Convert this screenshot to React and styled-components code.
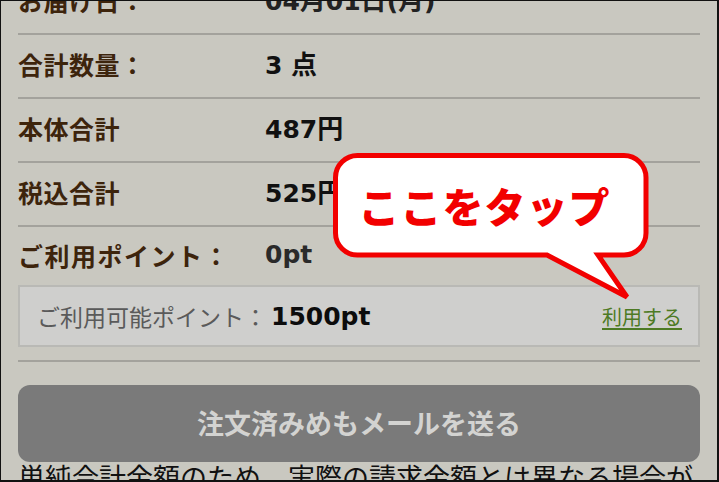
import React from "react";
import styled, { createGlobalStyle } from "styled-components";

const Global = createGlobalStyle`
  html, body { margin: 0; padding: 0; background: #c9c8c0; }
  body { font-family: "Noto Sans CJK JP", "Liberation Sans", sans-serif; }
`;

const Frame = styled.div`
  position: relative;
  box-sizing: border-box;
  width: 719px;
  height: 482px;
  overflow: hidden;
  background: #c9c8c0;
  border-top: 1px solid #111;
  border-left: 1px solid #111;
  border-right: 2px solid #111;
  border-bottom: 2px solid #111;
`;

const Content = styled.div`
  margin-top: -30px;
  padding: 0 17px 0 17px;
  display: flex;
  flex-direction: column;
`;

const Row = styled.div`
  display: flex;
  flex: none;
  box-sizing: border-box;
  height: ${(p) => p.$h || 64}px;
  border-bottom: ${(p) => (p.$noLine ? "none" : "2px solid #a3a29c")};
  align-items: ${(p) => (p.$top ? "flex-start" : "center")};
  padding-top: ${(p) => (p.$top ? "11px" : "0")};
  padding-bottom: ${(p) => (p.$top ? "0" : "4px")};
`;

const Label = styled.div`
  width: 247px;
  flex: none;
  font-size: 25px;
  font-weight: 700;
  color: #3d240c;
  letter-spacing: ${(p) => p.$ls || 0.5}px;
  line-height: 34px;
`;

const Value = styled.div`
  font-family: "DejaVu Sans", "Noto Sans CJK JP", sans-serif;
  font-size: 25px;
  font-weight: 700;
  color: ${(p) => p.$color || "#111"};
  line-height: 34px;
  span {
    font-family: "Noto Sans CJK JP", sans-serif;
    font-size: 26px;
  }
`;

const PointsSection = styled.div`
  display: flex;
  flex-direction: column;
  border-bottom: 2px solid #a3a29c;
  padding-bottom: 13px;
`;

const PointsBox = styled.div`
  box-sizing: border-box;
  height: 62px;
  display: flex;
  align-items: center;
  background: #cfcfcd;
  border: 2px solid #b9b9b5;
  padding: 0 16px 0 17px;
`;

const BoxLabel = styled.span`
  font-size: 23px;
  color: #5a5a5a;
  font-weight: 400;
`;

const BoxValue = styled.span`
  font-family: "DejaVu Sans", sans-serif;
  font-size: 25px;
  font-weight: 700;
  color: #0c0c0c;
  margin-left: 4px;
`;

const UseLink = styled.a`
  margin-left: auto;
  font-size: 20px;
  color: #4d7a24;
  text-decoration: underline;
  text-underline-offset: 3px;
  cursor: pointer;
`;

const SendButton = styled.button`
  margin-top: 23px;
  height: 77px;
  width: 100%;
  border: none;
  border-radius: 12px;
  background: #7a7a7a;
  color: #d3d3d1;
  font-family: "Noto Sans CJK JP", sans-serif;
  font-size: 27px;
  font-weight: 700;
  padding-bottom: 4px;
`;

const Note = styled.p`
  margin: -3px 0 0 0;
  font-size: 27px;
  line-height: 36px;
  color: #111;
  white-space: nowrap;
`;

const Callout = styled.div`
  position: absolute;
  left: 329px;
  top: 149px;
  width: 325px;
  height: 152px;
`;

const CalloutSvg = styled.svg`
  position: absolute;
  inset: 0;
`;

const CalloutText = styled.div`
  position: absolute;
  left: 5px;
  top: 5px;
  width: 311px;
  height: 100px;
  display: flex;
  align-items: center;
  justify-content: center;
  font-size: 41px;
  font-weight: 900;
  color: #f20000;
  letter-spacing: 1px;
  padding-right: 12px;
  box-sizing: border-box;
`;

export default function App() {
  return (
    <>
      <Global />
      <Frame>
        <Content>
          <Row>
            <Label>お届け日：</Label>
            <Value $color="#222">
              04<span>月</span>01<span>日</span>(<span>月</span>)
            </Value>
          </Row>
          <Row>
            <Label>合計数量：</Label>
            <Value>
              3 <span>点</span>
            </Value>
          </Row>
          <Row>
            <Label>本体合計</Label>
            <Value>
              487<span>円</span>
            </Value>
          </Row>
          <Row>
            <Label>税込合計</Label>
            <Value>
              525<span>円</span>
            </Value>
          </Row>
          <PointsSection>
            <Row $noLine $h={58} $top>
              <Label $ls={1.5}>ご利用ポイント：</Label>
              <Value $color="#2a2a2a">0pt</Value>
            </Row>
            <PointsBox>
              <BoxLabel>ご利用可能ポイント：</BoxLabel>
              <BoxValue>1500pt</BoxValue>
              <UseLink>利用する</UseLink>
            </PointsBox>
          </PointsSection>
          <SendButton>注文済みめもメールを送る</SendButton>
          <Note>単純合計金額のため、実際の請求金額とは異なる場合が</Note>
        </Content>
        <Callout>
          <CalloutSvg width="325" height="152" viewBox="0 0 325 152">
            <path
              d="M 28 5.5 H 294 A 22 22 0 0 1 316 27.5 V 83 A 22 22 0 0 1 294 105 H 268 L 297 147 L 217 105 H 28 A 22 22 0 0 1 5.5 83 V 27.5 A 22 22 0 0 1 28 5.5 Z"
              fill="#ffffff"
              stroke="#f20000"
              strokeWidth="5"
              strokeLinejoin="miter"
            />
          </CalloutSvg>
          <CalloutText>ここをタップ</CalloutText>
        </Callout>
      </Frame>
    </>
  );
}
